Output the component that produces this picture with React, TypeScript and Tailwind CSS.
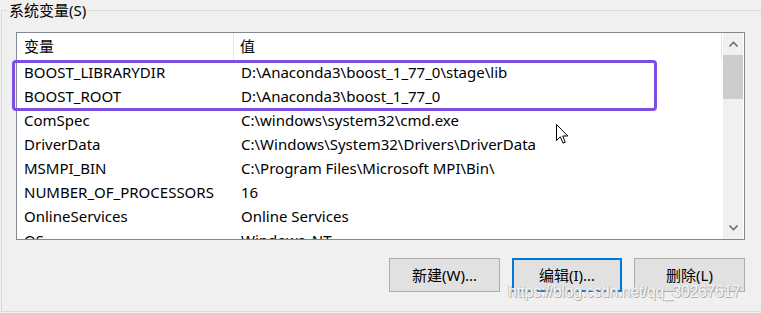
import React from "react";

const rows: [string, string][] = [
  ["BOOST_LIBRARYDIR", "D:\\Anaconda3\\boost_1_77_0\\stage\\lib"],
  ["BOOST_ROOT", "D:\\Anaconda3\\boost_1_77_0"],
  ["ComSpec", "C:\\windows\\system32\\cmd.exe"],
  ["DriverData", "C:\\Windows\\System32\\Drivers\\DriverData"],
  ["MSMPI_BIN", "C:\\Program Files\\Microsoft MPI\\Bin\\"],
  ["NUMBER_OF_PROCESSORS", "16"],
  ["OnlineServices", "Online Services"],
  ["OS", "Windows_NT"],
];

const font = { fontFamily: '"Noto Sans", "Noto Sans CJK SC", sans-serif' };

function Chevron({ up }: { up?: boolean }) {
  return (
    <svg width="9" height="6" viewBox="0 0 9 6">
      <path
        d={up ? "M0.5 5.5 L4.5 1.2 L8.5 5.5" : "M0.5 0.5 L4.5 4.8 L8.5 0.5"}
        fill="none"
        stroke="#606060"
        strokeWidth="1.4"
      />
    </svg>
  );
}

export default function App() {
  return (
    <div
      className="relative w-[761px] h-[313px] bg-[#f0f0f0] overflow-hidden text-[15px] text-black"
      style={font}
    >
      <div className="relative mt-[10px] ml-px h-[302px] border-t border-l border-b border-[#dcdcdc] pt-[21px] pl-[14px]">
        <div className="absolute -top-[10px] left-[6px] bg-[#f0f0f0] px-[1px] leading-[18px] text-[15px]">
          系统变量(S)
        </div>
        {/* list box */}
        <div className="flex w-[729px] h-[208px] border border-[#828790] bg-white">
          <div className="flex-1 flex flex-col overflow-hidden">
            <div className="flex h-[27px] shrink-0 items-center">
              <div className="w-[217px] h-full pl-[7px] flex items-center border-r border-[#e5e5e5]">变量</div>
              <div className="flex-1 h-full pl-[6px] flex items-center border-r border-[#e5e5e5]">值</div>
            </div>
            {rows.map(([k, v]) => (
              <div key={k} className="flex h-[24px] shrink-0 items-center">
                <div className="w-[217px] pl-[7px] whitespace-nowrap">{k}</div>
                <div className="flex-1 pl-[7px] whitespace-nowrap">{v}</div>
              </div>
            ))}
          </div>
          {/* scrollbar */}
          <div className="w-[20px] ml-px mr-px bg-[#f0f0f0] flex flex-col">
            <div className="h-[22px] flex items-center justify-center">
              <Chevron up />
            </div>
            <div className="h-[44px] bg-[#cdcdcd]" />
            <div className="flex-1" />
            <div className="h-[22px] flex items-center justify-center">
              <Chevron />
            </div>
          </div>
        </div>
        {/* buttons */}
        <div className="flex justify-end gap-[12px] w-[729px] mt-[18px]">
          <button className="w-[111px] h-[34px] bg-[#e1e1e1] border border-[#adadad] text-[15px]">新建(W)...</button>
          <button className="w-[110px] h-[34px] bg-[#e1e1e1] border-2 border-[#0078d7] text-[15px]">编辑(I)...</button>
          <button className="w-[111px] h-[34px] bg-[#e1e1e1] border border-[#adadad] text-[15px]">删除(L)</button>
        </div>
      </div>

      {/* highlight */}
      <div className="absolute left-[12px] top-[60px] w-[645px] h-[51px] border-[3px] border-[#7b4fe4] rounded-[4px]" />

      {/* cursor */}
      <svg className="absolute left-[556px] top-[124px]" width="13" height="21" viewBox="0 0 13 21">
        <path d="M0.5 0.5 L0.5 16.5 L4.3 12.8 L7 19.2 L9.3 18.2 L6.7 12 L11.8 12 Z" fill="white" stroke="black" strokeWidth="1" />
      </svg>

      {/* watermark */}
      <div
        className="absolute left-[508px] top-[280px] text-[16px] leading-[24px] tracking-[-0.4px] text-[#f6f6f6] [text-shadow:1px_1px_0_#b0b0b0,-1px_0_0_#c8c8c8] whitespace-nowrap"
        style={{ fontFamily: '"Liberation Sans", sans-serif' }}
      >
        https://blog.csdn.net/qq_30267617
      </div>
    </div>
  );
}
